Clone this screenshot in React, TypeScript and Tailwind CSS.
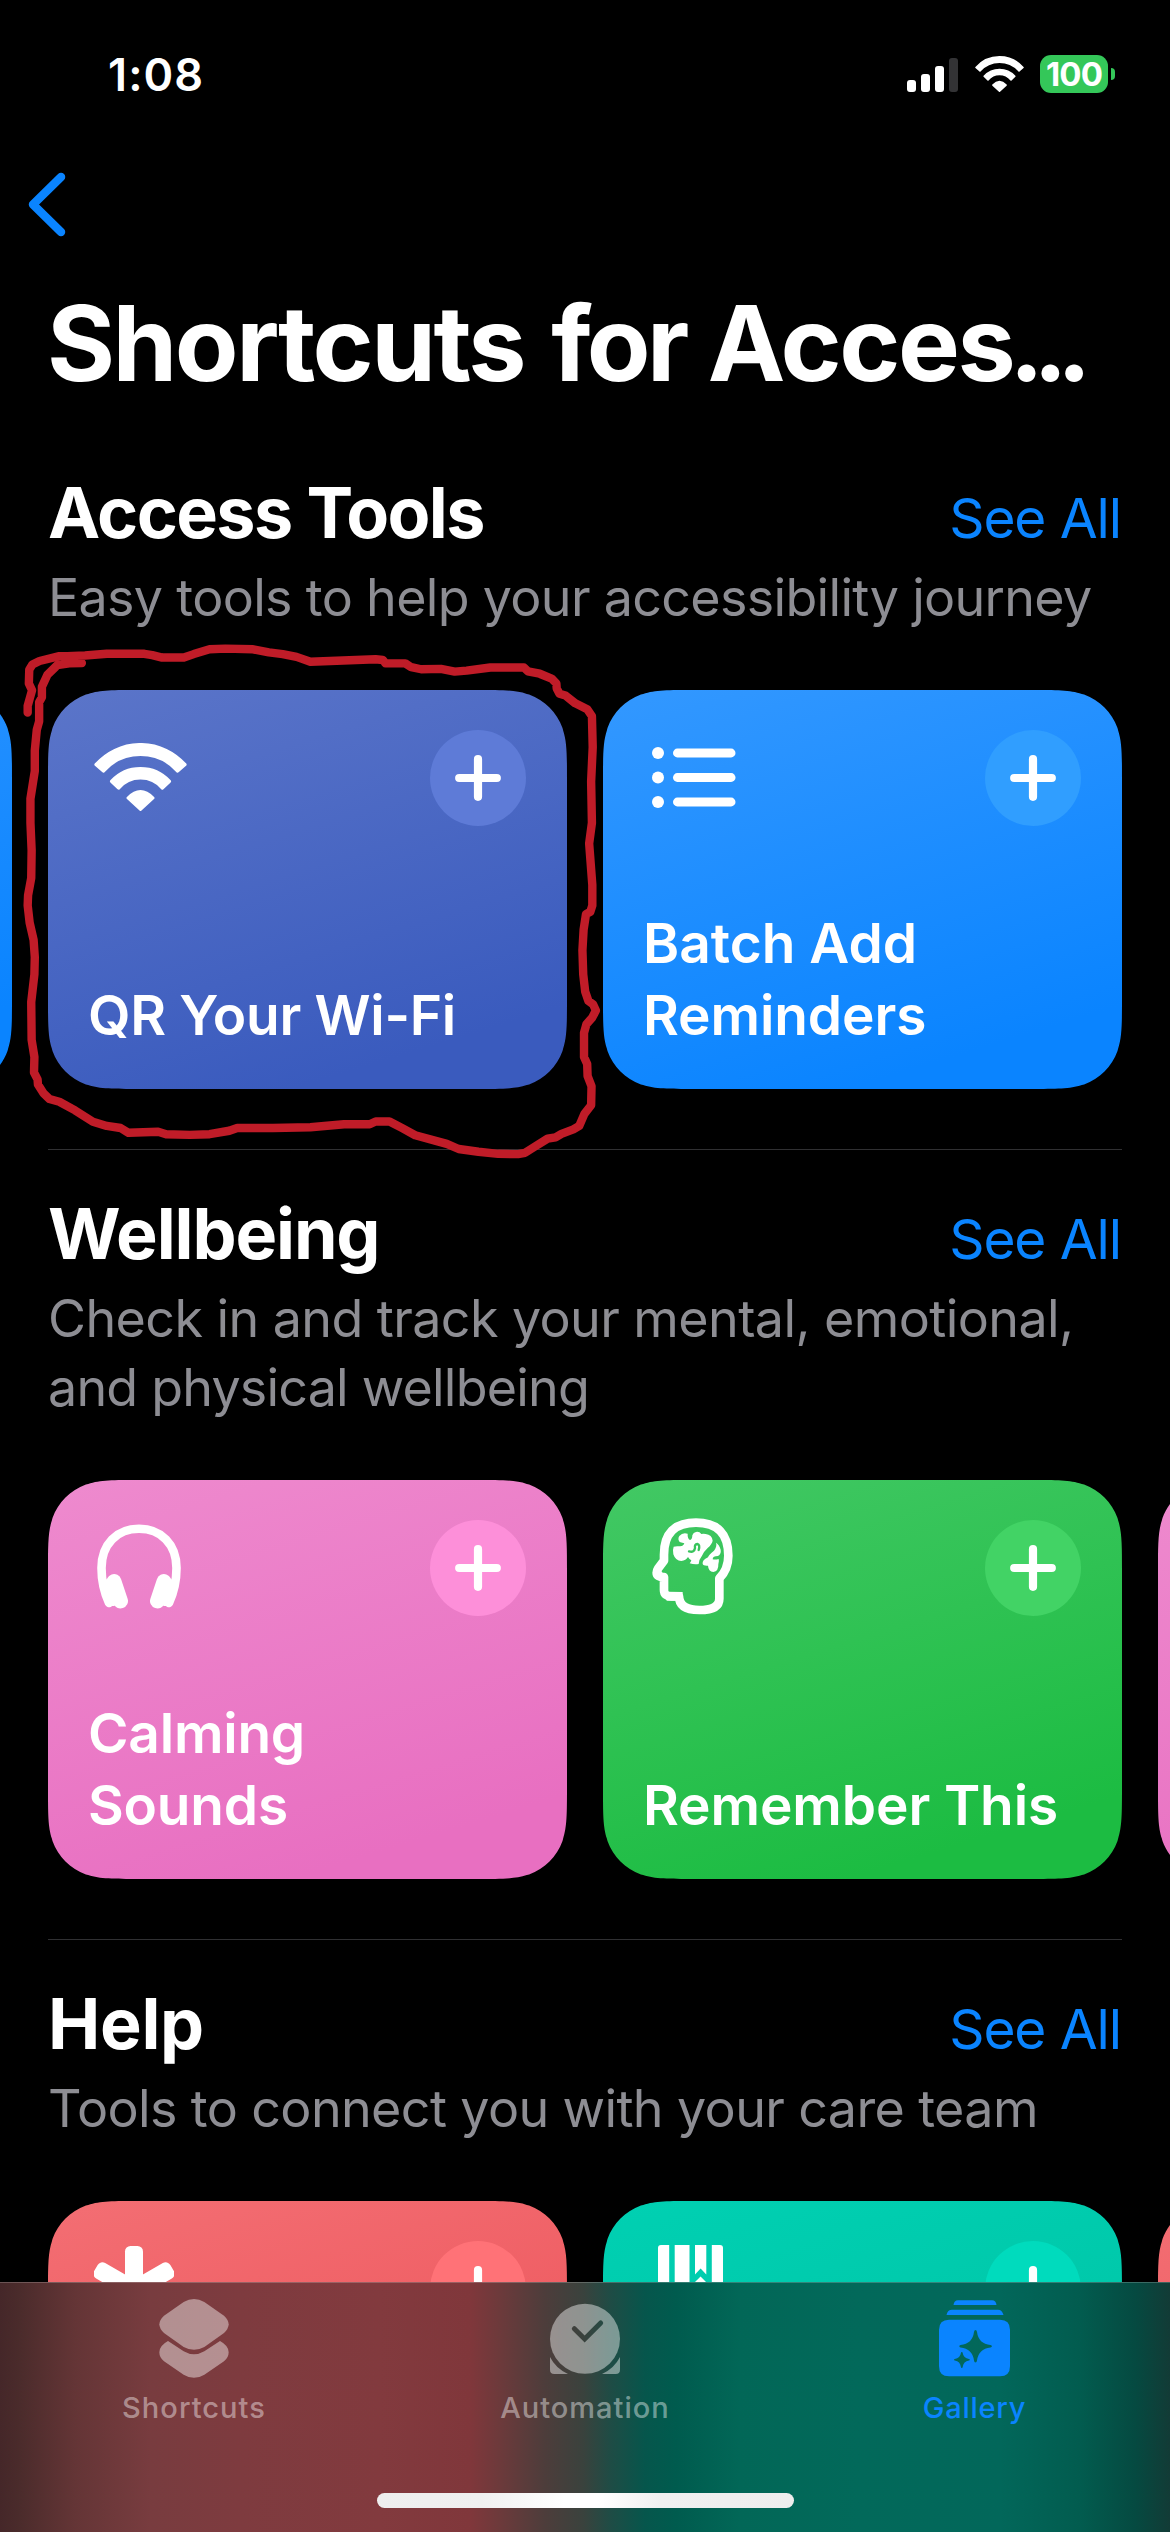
import type { ReactNode } from "react";

/** Continuous-curvature rounded rectangle, as used for the shortcut cards. */
function smoothRect(w: number, h: number, r: number): string {
  const a = 1.528665 * r;
  const b = 1.088493 * r;
  const c = 0.868407 * r;
  const d = 0.669934 * r;
  const e = 0.065496 * r;
  const f = 0.631494 * r;
  const g = 0.074911 * r;
  const i = 0.372824 * r;
  const j = 0.169059 * r;
  return [
    `M${a} 0H${w - a}`,
    `C${w - b} 0 ${w - c} 0 ${w - d} ${e}L${w - f} ${g}C${w - i} ${j} ${w - j} ${i} ${w - g} ${f}L${w - e} ${d}C${w} ${c} ${w} ${b} ${w} ${a}`,
    `V${h - a}C${w} ${h - b} ${w} ${h - c} ${w - e} ${h - d}L${w - g} ${h - f}C${w - j} ${h - i} ${w - i} ${h - j} ${w - f} ${h - g}L${w - d} ${h - e}C${w - c} ${h} ${w - b} ${h} ${w - a} ${h}`,
    `H${a}C${b} ${h} ${c} ${h} ${d} ${h - e}L${f} ${h - g}C${i} ${h - j} ${j} ${h - i} ${g} ${h - f}L${e} ${h - d}C0 ${h - c} 0 ${h - b} 0 ${h - a}`,
    `V${a}C0 ${b} 0 ${c} ${e} ${d}L${g} ${f}C${j} ${i} ${i} ${j} ${f} ${g}L${d} ${e}C${c} 0 ${b} 0 ${a} 0Z`,
  ].join("");
}

const CARD_CLIP = { clipPath: `path("${smoothRect(519, 399, 60)}")` };

function WifiIcon({ className }: { className: string }) {
  return (
    <svg viewBox="0 0 93 68" className={className} fill="currentColor" stroke="currentColor" strokeWidth="3" strokeLinejoin="round">
      <path d="M1.9 21.6A59.5 59.5 0 0 1 91.1 21.6L83.6 28.2A49.5 49.5 0 0 0 9.4 28.2Z" />
      <path d="M17.4 38.3A39.5 39.5 0 0 1 75.6 38.3L68.4 45.2A28.5 28.5 0 0 0 24.6 45.2Z" />
      <path d="M34 55Q46.5 42 59 55L46.5 66.5Z" />
    </svg>
  );
}

function ListIcon() {
  return (
    <svg viewBox="0 0 84 62" className="ml-[9px] mt-[16px] h-[62px] w-[84px]" fill="currentColor">
      {[7, 31.5, 56].map((y) => (
        <g key={y}>
          <circle cx="6" cy={y} r="6" />
          <rect x="21" y={y - 4.4} width="62.5" height="8.8" rx="4.4" />
        </g>
      ))}
    </svg>
  );
}

function HeadphonesIcon() {
  return (
    <svg viewBox="0 0 84 86" className="ml-[8.5px] mt-[4px] h-[86px] w-[84px]" fill="none" stroke="currentColor" strokeLinecap="round">
      <path d="M12 79C6.5 67 4.5 56 4.5 44C4.5 20 20 4.8 42 4.8C64 4.8 79.5 20 79.5 44C79.5 56 77.5 67 72 79" strokeWidth="8.6" />
      <path d="M17 57.5L23.5 77M67 57.5L60.5 77" strokeWidth="15" />
      <path d="M11 60L16 77M73 60L68 77" strokeWidth="10" />
    </svg>
  );
}

function BrainHeadIcon() {
  return (
    <svg viewBox="36 24 246 294" className="ml-[9px] mt-[-2px] h-[98px] w-[82px]">
      <path
        d="M115 259H94Q72 259 72 240V201Q50 202 50 188Q50 182 54 176L72 152V134Q72 38 168 38Q265 38 265 137Q265 178 238 205V266Q238 300 178 300Q117 300 117 259Z"
        fill="none"
        stroke="white"
        strokeWidth="26"
        strokeLinejoin="round"
      />
      <path d="M62 202V180L76 201H84V245L128 246V262L118 272H80Z" fill="white" />
      <path
        d="M101 110Q97 120 100 133Q106 152 124 153Q138 152 144 141Q148 148 154 151Q152 157 149 160Q163 164 176 162Q177 148 186 137Q192 124 203 114Q216 102 218 92Q216 74 197 72Q190 71 184 72Q178 64 168 66Q160 67 157 76Q157 88 150 90Q142 86 143 71Q128 66 118 78Q112 88 119 96Q128 98 133 100Q130 110 118 109Q108 108 101 110Z"
        fill="white"
      />
      <path d="M147 124Q163 129 165 114Q163 103 172 102Q181 104 176 120" fill="none" stroke="#38c45c" strokeWidth="7" strokeLinecap="round" />
      <path d="M228 98Q232 108 222 122Q206 134 204 142Q186 150 188 162Q190 168 204 167Q205 184 220 186Q236 184 235 163Q238 152 236 147Q226 150 218 148Q218 138 234 138Q244 132 242 119Q238 104 228 98Z" fill="white" />
    </svg>
  );
}

function AsteriskIcon() {
  return (
    <svg viewBox="0 0 80 92" className="ml-[5.5px] mt-[5px] h-[92px] w-[80px]" fill="white">
      {[0, 60, 120].map((deg) => (
        <rect key={deg} x="31" y="0" width="18" height="88" rx="5.5" transform={`rotate(${deg} 40 44)`} />
      ))}
    </svg>
  );
}

function BooksIcon() {
  return (
    <svg viewBox="0 0 65 86" className="ml-[15px] mt-[4px] h-[86px] w-[65px]" fill="white">
      <path d="M3 0H11.2V86H0V3Q0 0 3 0Z" />
      <path d="M16.7 0H31.5V86H16.7Z" />
      <path d="M37 0H48.3V29.5L42.6 23.5L37 29.5Z" />
      <path d="M42.6 31.5L49 38V86H36V38Z" />
      <path d="M53.8 0H62Q65 0 65 3V86H53.8Z" />
    </svg>
  );
}

function PlusButton({ tone }: { tone: string }) {
  return (
    <div className={`flex size-24 items-center justify-center rounded-full ${tone}`}>
      <svg viewBox="0 0 46 46" className="size-[46px]" stroke="white" strokeWidth="8.2" strokeLinecap="round">
        <path d="M23 4.2V41.8M4.2 23H41.8" />
      </svg>
    </div>
  );
}

interface CardProps {
  background: string;
  tone?: string;
  icon?: ReactNode;
  lines?: { text: string; spacing: string }[];
}

function Card({ background, tone, icon, lines = [] }: CardProps) {
  return (
    <div
      className={`flex h-[399px] w-[519px] shrink-0 flex-col justify-between pt-[40px] pr-[41px] pb-[38px] pl-[40px] text-white ${background}`}
      style={CARD_CLIP}
    >
      <div className="flex h-24 items-start justify-between">
        {icon}
        {tone && <PlusButton tone={tone} />}
      </div>
      <div className="text-[55px] leading-[72px] font-[570] whitespace-nowrap">
        {lines.map((l) => (
          <div key={l.text} className={l.spacing}>
            {l.text}
          </div>
        ))}
      </div>
    </div>
  );
}

interface SectionProps {
  title: string;
  titleSpacing: string;
  subtitle: { text: string; spacing: string }[];
  /** Horizontal position of the card row's scroll offset. */
  offset: string;
  children: ReactNode;
}

function Section({ title, titleSpacing, subtitle, offset, children }: SectionProps) {
  return (
    <section className="shrink-0">
      <div className="mr-[49px] ml-[48px] flex h-[85px] items-baseline justify-between leading-[85px]">
        <h2 className={`text-[70px] font-bold text-white ${titleSpacing}`}>{title}</h2>
        <a className="text-[55px] tracking-[-1.1px] text-[#0a84ff]">See All</a>
      </div>
      <div className="mt-2 ml-[48px] text-[52px] leading-[69px] whitespace-nowrap text-[#8d8d93]">
        {subtitle.map((s) => (
          <div key={s.text} className={s.spacing}>
            {s.text}
          </div>
        ))}
      </div>
      <div className={`mt-[58px] flex gap-9 ${offset}`}>{children}</div>
    </section>
  );
}

function Divider() {
  return <div className="mt-[60px] mb-[41px] ml-[48px] h-px w-[1074px] shrink-0 bg-[#303032]" />;
}

function StatusBar() {
  return (
    <div className="flex h-[148px] shrink-0 items-center justify-between pr-[55px] pl-[108px]">
      <div className="pt-[1px] text-[45px] leading-[54px] font-[560] tracking-[1.1px] text-white">1:08</div>
      <div className="flex h-[38px] items-center">
        <svg viewBox="0 0 52 34" className="mt-[1px] h-[34px] w-[52px]">
          <rect x="0" y="22" width="9" height="12" rx="3" fill="white" />
          <rect x="14" y="16" width="9" height="18" rx="3" fill="white" />
          <rect x="28" y="8" width="9" height="26" rx="3" fill="white" />
          <rect x="42" y="0" width="9" height="34" rx="3" fill="#333335" />
        </svg>
        <WifiIcon className="ml-[15.5px] h-[36px] w-[49px] text-white" />
        <div className="ml-[16.5px] flex h-[38px] w-[68px] items-center justify-center rounded-[11px] bg-[#34c759] text-[33px] leading-[38px] font-[680] tracking-[-0.9px] text-white">
          100
        </div>
        <div className="ml-[3px] h-[12px] w-[4px] rounded-r-full bg-[#34c759]" />
      </div>
    </div>
  );
}

function ShortcutsTabIcon() {
  return (
    <svg viewBox="27 42 208 237" className="h-[79px] w-[70px]" fill="currentColor">
      <path d="M100 51Q131 33 162 51L221 92Q249 118 221 144L162 186Q131 203 100 186L41 144Q13 118 41 92Z" />
      <path d="M53 168Q27 182 27 202Q27 218 41 229L100 269Q131 288 162 269L221 229Q235 218 235 202Q235 182 209 168L162 199Q131 217 100 199Z" />
    </svg>
  );
}

function AutomationTabIcon() {
  return (
    <svg viewBox="1200 42 210 237" className="h-[79px] w-[70px]" fill="currentColor">
      <mask id="clock-hands">
        <rect x="1200" y="42" width="210" height="237" fill="white" />
        <path d="M1273 131L1304 162L1352 114" fill="none" stroke="black" strokeWidth="15" strokeLinecap="round" strokeLinejoin="miter" />
      </mask>
      <circle cx="1305" cy="161.5" r="105" mask="url(#clock-hands)" />
      <path d="M1200 216Q1217 250 1254 267H1213Q1200 267 1200 254Z" />
      <path d="M1410 216Q1393 250 1356 267H1397Q1410 267 1410 254Z" />
    </svg>
  );
}

function GalleryTabIcon() {
  return (
    <svg viewBox="0 0 71 79" className="h-[79px] w-[71px]" fill="currentColor" fillRule="evenodd">
      <path d="M14.5 6Q15 1.3 19 1.3H53Q57 1.3 57.5 6Z" />
      <path d="M7.5 16Q8.5 10.8 13 10.8H59Q63 10.8 64.5 16Z" />
      <path d="M10 20.7H61Q71 20.7 71 30.7V67.3Q71 77.3 61 77.3H10Q0 77.3 0 67.3V30.7Q0 20.7 10 20.7ZM36.5 31Q35.3 31 35 33Q33.5 44.8 21.5 46Q20.3 46.3 20.3 47.2Q20.3 48.1 21.5 48.4Q33.5 49.6 35 61.5Q35.3 63.5 36.5 63.5Q37.7 63.5 38 61.5Q39.5 49.6 51.5 48.4Q52.9 48.1 52.9 47.2Q52.9 46.3 51.5 46Q39.5 44.8 38 33Q37.7 31 36.5 31ZM22.8 53Q22 53 21.9 54Q21.2 59.2 15.8 60Q15 60.2 15 60.8Q15 61.4 15.8 61.6Q21.2 62.4 21.9 68Q22 69 22.8 69Q23.6 69 23.7 68Q24.4 62.4 30 61.6Q30.8 61.4 30.8 60.8Q30.8 60.2 30 60Q24.4 59.2 23.7 54Q23.6 53 22.8 53Z" />
    </svg>
  );
}

function Tab({ icon, label, tone, spacing }: { icon: ReactNode; label: string; tone: string; spacing: string }) {
  return (
    <div className={`flex w-[390px] flex-col items-center ${tone}`}>
      {icon}
      <div className={`mt-[12px] text-[29px] leading-[36px] font-medium ${spacing}`}>{label}</div>
    </div>
  );
}

function TabBar() {
  return (
    <nav className="absolute inset-x-0 bottom-0 h-[250px] border-t border-white/20 bg-[linear-gradient(90deg,#452729_0px,#4a2b2b_18px,#643536_75px,#783c3f_150px,#7e3b3f_240px,#823a3e_380px,#80373b_470px,#6b3a3b_502px,#4d3d3b_545px,#3a423d_583px,#1f4c45_610px,#06564c_645px,#005b4e_675px,#026757_740px,#02695a_860px,#02675a_1000px,#025c4f_1080px,#054a41_1135px,#123b36_1170px)] bg-origin-border">
      <div className="-ml-px flex pt-[16px]">
        <Tab icon={<ShortcutsTabIcon />} label="Shortcuts" tone="text-white/43" spacing="tracking-[1.05px]" />
        <Tab icon={<AutomationTabIcon />} label="Automation" tone="text-white/43 pl-px" spacing="tracking-[1px] pl-px" />
        <Tab icon={<GalleryTabIcon />} label="Gallery" tone="text-[#0a84ff]" spacing="tracking-[0.75px] pl-px" />
      </div>
      <div className="mx-auto mt-[67px] h-[15px] w-[417px] rounded-full bg-[linear-gradient(90deg,#eeeeee_0%,#f0f0f0_25%,#ffffff_45%,#ffffff_53%,#f0f0f0_68%,#eeeeee_100%)]" />
    </nav>
  );
}

/** Freehand marker loop drawn round the first card. */
function MarkerLoop() {
  return (
    <svg viewBox="0 0 1568 1568" preserveAspectRatio="none" className="absolute top-[630px] left-0 h-[540px] w-[620px]">
      <polyline
        points="70,240 70,220 81,175 73,155 74,115 82,100 100,90 150,76 170,76 215,74 270,69 365,69 385,73 410,80 465,80 490,70 530,56 570,54 640,56 680,65 715,70 750,78 785,92 950,85 968,87 975,97 1025,97 1040,108 1065,114 1115,113 1150,121 1180,118 1240,109 1325,109 1335,120 1365,127 1395,141 1407,155 1408,170 1415,185 1430,190 1455,213 1485,230 1497,250 1499,340 1495,440 1497,560 1490,620 1498,740 1498,800 1493,818 1482,825 1476,870 1473,930 1475,1000 1480,1050 1488,1077 1500,1087 1507,1105 1498,1125 1483,1145 1477,1170 1477,1240 1485,1260 1486,1295 1496,1325 1495,1380 1478,1405 1465,1440 1450,1450 1420,1463 1405,1473 1385,1477 1350,1502 1328,1518 1310,1522 1260,1521 1210,1515 1160,1507 1130,1492 1050,1467 1015,1445 985,1427 950,1427 935,1435 870,1435 785,1444 690,1446 600,1446 580,1454 530,1464 480,1466 420,1464 400,1457 325,1460 305,1446 270,1440 235,1428 190,1395 150,1370 125,1362 110,1345 96,1320 95,1305 86,1285 87,1240 80,1190 79,1080 87,1000 88,950 85,900 75,850 70,800 71,770 79,720 80,640 77,560 77,490 88,410 88,350 93,290 99,265 99,210 106,195 106,165 120,130 145,102 175,97 207,96"
        fill="none"
        stroke="#c01c28"
        strokeWidth="8.4"
        strokeLinecap="round"
        strokeLinejoin="round"
        vectorEffect="non-scaling-stroke"
      />
    </svg>
  );
}

export default function App() {
  return (
    <div className="relative flex h-[2532px] w-[1170px] flex-col overflow-hidden bg-black font-['Inter',sans-serif]">
      <StatusBar />
      <header className="h-[322px] shrink-0">
        <svg viewBox="0 0 38 66" className="mt-[24px] ml-[28px] h-[66px] w-[38px]" fill="none" stroke="#0a84ff" strokeWidth="8.5" strokeLinecap="round" strokeLinejoin="round">
          <path d="M33 5L5 32.5L33 60" />
        </svg>
        <h1 className="mt-[42px] ml-[47px] text-[104px] leading-[126px] font-bold tracking-[-2.5px] whitespace-nowrap text-white">
          Shortcuts <span className="ml-[5px] tracking-[-3.6px]">for</span> Acces<span className="-ml-[4px] tracking-[-11px]">...</span>
        </h1>
      </header>

      <Section
        title="Access Tools"
        titleSpacing="tracking-[-1.6px]"
        subtitle={[{ text: "Easy tools to help your accessibility journey", spacing: "tracking-[-0.68px]" }]}
        offset="-ml-[507px]"
      >
        <Card background="bg-[linear-gradient(163deg,#2f95ff,#0a84ff_85%)]" />
        <Card
          background="bg-[linear-gradient(163deg,#5b75c9,#3a5bbe_85%)]"
          tone="bg-[#5e7bd7]"
          icon={<WifiIcon className="mt-[13px] ml-[6px] h-[68px] w-[93px]" />}
          lines={[{ text: "QR Your Wi-Fi", spacing: "tracking-[-0.3px]" }]}
        />
        <Card
          background="bg-[linear-gradient(163deg,#3398ff,#0a84ff_85%)]"
          tone="bg-[#309eff]"
          icon={<ListIcon />}
          lines={[
            { text: "Batch Add", spacing: "tracking-normal" },
            { text: "Reminders", spacing: "tracking-[-0.1px]" },
          ]}
        />
      </Section>
      <Divider />

      <Section
        title="Wellbeing"
        titleSpacing="tracking-[-1.1px]"
        subtitle={[
          { text: "Check in and track your mental, emotional,", spacing: "tracking-[-0.58px]" },
          { text: "and physical wellbeing", spacing: "tracking-[-0.8px]" },
        ]}
        offset="ml-[48px]"
      >
        <Card
          background="bg-[linear-gradient(163deg,#ee8ace,#e86fc1_85%)]"
          tone="bg-[#fd8fd9]"
          icon={<HeadphonesIcon />}
          lines={[
            { text: "Calming", spacing: "tracking-[-0.2px]" },
            { text: "Sounds", spacing: "tracking-[-0.2px]" },
          ]}
        />
        <Card
          background="bg-[linear-gradient(163deg,#42c864,#1cbc42_85%)]"
          tone="bg-[#42d365]"
          icon={<BrainHeadIcon />}
          lines={[{ text: "Remember This", spacing: "tracking-[-0.1px]" }]}
        />
        <Card background="bg-[linear-gradient(163deg,#ee8ace,#e86fc1_85%)]" />
      </Section>
      <Divider />

      <Section
        title="Help"
        titleSpacing="tracking-[-0.3px]"
        subtitle={[{ text: "Tools to connect you with your care team", spacing: "tracking-[-0.62px]" }]}
        offset="ml-[48px]"
      >
        <Card background="bg-[linear-gradient(163deg,#f36e73,#ec5258_85%)]" tone="bg-[#ff7277]" icon={<AsteriskIcon />} />
        <Card background="bg-[linear-gradient(163deg,#00d0b2,#00c2a4_85%)]" tone="bg-[#00dbbd]" icon={<BooksIcon />} />
        <Card background="bg-[linear-gradient(163deg,#f36e73,#ec5258_85%)]" />
      </Section>

      <TabBar />
      <MarkerLoop />
    </div>
  );
}
